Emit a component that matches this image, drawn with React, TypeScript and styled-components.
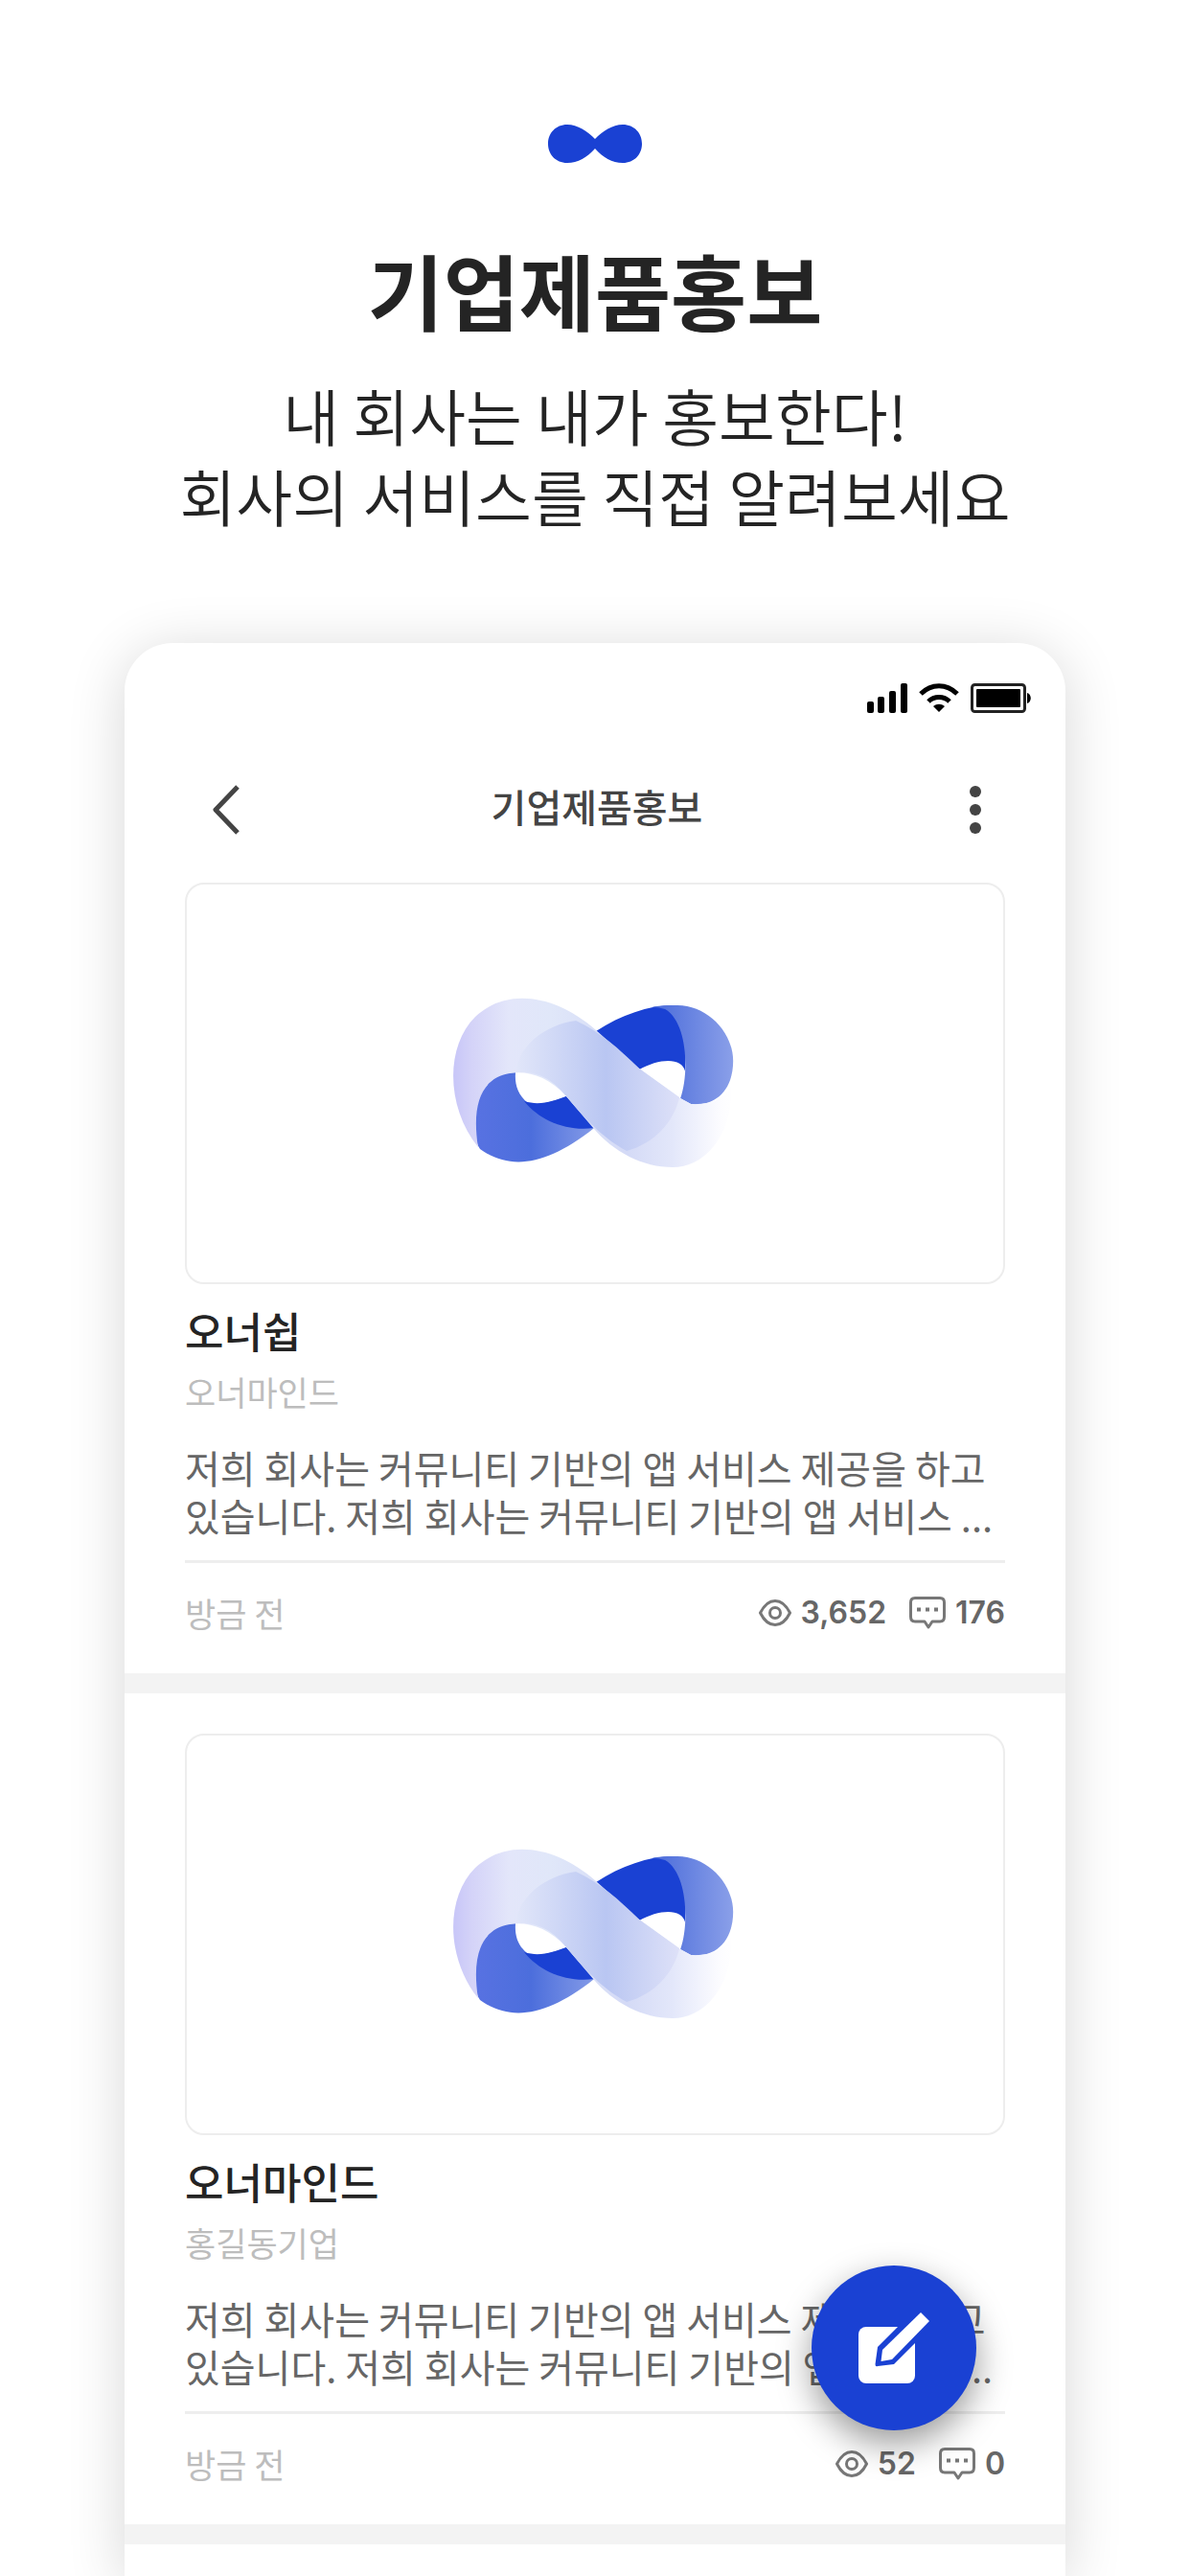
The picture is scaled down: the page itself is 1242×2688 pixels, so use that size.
import React from "react";
import styled, { createGlobalStyle } from "styled-components";

const GlobalStyle = createGlobalStyle`
  * { box-sizing: border-box; }
  body { margin: 0; background: #fff; }
  body, button { font-family: "Noto Sans CJK KR", "Noto Sans", sans-serif; }
  h1, h2, h3, p { margin: 0; }
  svg { display: block; }
`;

const Page = styled.div`
  min-height: 100vh;
  display: flex;
  flex-direction: column;
  overflow: hidden;
  color: #242424;
`;

const Hero = styled.header`
  display: flex;
  flex-direction: column;
  align-items: center;
  padding: 130px 24px 113px;
  text-align: center;
`;

const HeroTitle = styled.h1`
  margin-top: 76px;
  font-size: 86px;
  line-height: 112px;
  font-weight: 700;
`;

const HeroText = styled.p`
  margin-top: 32px;
  font-size: 64px;
  line-height: 84px;
  font-weight: 350;
`;

const Phone = styled.main`
  position: relative;
  flex: 1;
  display: flex;
  flex-direction: column;
  margin: 0 130px;
  border-radius: 50px 50px 0 0;
  background: #fff;
  box-shadow: 0 8px 60px rgba(0, 0, 0, 0.16);
`;

const StatusBar = styled.div`
  display: flex;
  justify-content: flex-end;
  align-items: center;
  gap: 12px;
  padding: 40px 36px 0 0;
  height: 74px;
`;

const NavBar = styled.nav`
  display: grid;
  grid-template-columns: 56px 1fr 56px;
  align-items: center;
  padding: 62px 88px 38px 92px;
`;

const IconButton = styled.button<{ $align: "flex-start" | "flex-end" }>`
  display: flex;
  align-items: center;
  justify-content: ${({ $align }) => $align};
  height: 76px;
  padding: 0;
  border: 0;
  background: none;
`;

const NavTitle = styled.h2`
  padding-bottom: 8px;
  text-align: center;
  font-size: 40px;
  line-height: 56px;
  font-weight: 500;
  color: #444;
`;

const Card = styled.article`
  padding: 42px 63px 39px;
  border-bottom: 21px solid #f3f3f3;

  &:first-of-type { padding-top: 0; }
`;

const Thumb = styled.div`
  display: flex;
  align-items: center;
  justify-content: center;
  aspect-ratio: 856 / 419;
  border: 2px solid #ededed;
  border-radius: 20px;

  svg { width: 35%; }
`;

const Name = styled.h3`
  margin-top: 18px;
  font-size: 44px;
  line-height: 60px;
  font-weight: 500;
`;

const Owner = styled.p`
  margin-top: 10px;
  font-size: 35px;
  line-height: 48px;
  color: #bdbdbd;
`;

const Body = styled.p`
  margin-top: 30px;
  padding-bottom: 22px;
  border-bottom: 3px solid #eee;
  font-size: 40px;
  line-height: 50px;
  color: #666;
  word-break: keep-all;
`;

const Meta = styled.footer`
  display: flex;
  align-items: center;
  justify-content: space-between;
  margin-top: 28px;
  color: #bdbdbd;
  font-size: 35px;
  line-height: 48px;
`;

const Stats = styled.div`
  display: flex;
  align-items: center;
  gap: 24px;
`;

const Stat = styled.span`
  display: flex;
  align-items: center;
  gap: 10px;
  font-family: Inter, "Noto Sans CJK KR", sans-serif;
  font-size: 32px;
  font-weight: 600;
  color: #666;
`;

const Fab = styled.button`
  position: absolute;
  right: 93px;
  bottom: 152px;
  display: flex;
  align-items: center;
  justify-content: center;
  width: 172px;
  height: 172px;
  padding: 0;
  border: 0;
  border-radius: 50%;
  background: #1a41d3;
  box-shadow: 0 14px 36px rgba(0, 0, 0, 0.4);
`;

const BrandMark = () => (
  <svg width="98" height="40" viewBox="0 0 98 40" fill="#1a41d3" aria-hidden="true">
    <path d="M20 0C31 0 41 7 49 15C57 7 67 0 78 0C90 0 98 9 98 20C98 31 90 40 78 40C67 40 57 34 49 25C41 34 31 40 20 40C8 40 0 31 0 20C0 9 8 0 20 0Z" />
  </svg>
);

const StatusIcons = () => (
  <>
    <svg width="42" height="31" viewBox="0 0 42 31" aria-hidden="true">
      <rect x="0" y="19" width="7" height="12" rx="2" />
      <rect x="11" y="14" width="7" height="17" rx="2" />
      <rect x="23" y="8" width="7" height="23" rx="2" />
      <rect x="35" y="0" width="7" height="31" rx="2" />
    </svg>
    <svg width="42" height="31" viewBox="0 0 42 31" fill="none" stroke="#000" strokeWidth="5" aria-hidden="true">
      <path d="M2 11C13 0 29 0 40 11" />
      <path d="M10 19C16 13 26 13 32 19" />
      <path d="M21 30L15 24C19 21 23 21 27 24Z" fill="#000" stroke="none" />
    </svg>
    <svg width="63" height="31" viewBox="0 0 63 31" aria-hidden="true">
      <rect x="1.500" y="1.500" width="55" height="28" rx="3" fill="none" stroke="#222" strokeWidth="3" />
      <rect x="6" y="6" width="46" height="19" rx="1" />
      <path d="M59 10C64 11 64 20 59 21Z" />
    </svg>
  </>
);

const BackIcon = () => (
  <svg width="28" height="52" viewBox="0 0 28 52" fill="none" stroke="#444" strokeWidth="5" strokeLinejoin="round" aria-hidden="true">
    <path d="M26 2L3 26L26 50" />
  </svg>
);

const MoreIcon = () => (
  <svg width="12" height="50" viewBox="0 0 12 50" fill="#444" aria-hidden="true">
    <circle cx="6" cy="6" r="6" />
    <circle cx="6" cy="25" r="6" />
    <circle cx="6" cy="44" r="6" />
  </svg>
);

const EyeIcon = () => (
  <svg width="34" height="28" viewBox="0 0 34 28" fill="none" stroke="#777" strokeWidth="3" aria-hidden="true">
    <path d="M1.500 14C6 5 11 1.500 17 1.500S28 5 32.500 14C28 23 23 26.500 17 26.500S6 23 1.500 14Z" />
    <circle cx="17" cy="14" r="5.500" />
  </svg>
);

const CommentIcon = () => (
  <svg width="38" height="34" viewBox="0 0 38 34" fill="none" stroke="#777" strokeWidth="3" strokeLinejoin="round" aria-hidden="true">
    <path d="M6 1.500H32Q36.500 1.500 36.500 6V21Q36.500 26 32 26H24L20 32L16 26H6Q1.500 26 1.500 21V6Q1.500 1.500 6 1.500Z" />
    <path d="M8 13.500H12M17 13.500H21M26 13.500H30" strokeWidth="4" />
  </svg>
);

const PencilIcon = () => (
  <svg width="74" height="74" viewBox="0 0 74 74" aria-hidden="true">
    <rect x="0" y="15" width="59" height="59" rx="8" fill="#fff" />
    <path d="M41 15L20 36L17.500 54Q17.500 57 20 56L37 54L59 32V9H47Z" fill="#1a41d3" />
    <path d="M65 0L74 9L35 49L23.500 51L25 39Z" fill="#fff" />
  </svg>
);

const RibbonLogo = ({ id }: { id: string }) => (
  <svg viewBox="0 -1 298 180" aria-hidden="true">
    <defs>
      <linearGradient id={`${id}-pale`} gradientUnits="userSpaceOnUse" x1="0" y1="0" x2="294" y2="0">
        <stop offset="0" stopColor="#c7c5f8" />
        <stop offset="0.070" stopColor="#d4d3f8" />
        <stop offset="0.200" stopColor="#e3e6fa" />
        <stop offset="0.350" stopColor="#e0e7f9" />
        <stop offset="0.620" stopColor="#d4daf6" />
        <stop offset="0.780" stopColor="#e3e7fa" />
        <stop offset="0.950" stopColor="#fcfcff" />
        <stop offset="1" stopColor="#fff" />
      </linearGradient>
      <linearGradient id={`${id}-mid`} gradientUnits="userSpaceOnUse" x1="67" y1="0" x2="237" y2="0">
        <stop offset="0" stopColor="#e1e6f9" />
        <stop offset="0.550" stopColor="#b9c6f2" />
        <stop offset="1" stopColor="#dee1f8" />
      </linearGradient>
      <linearGradient id={`${id}-left`} gradientUnits="userSpaceOnUse" x1="22" y1="0" x2="147" y2="0">
        <stop offset="0" stopColor="#5872e2" />
        <stop offset="0.480" stopColor="#4c6edc" />
        <stop offset="1" stopColor="#839ae7" />
      </linearGradient>
      <linearGradient id={`${id}-right`} gradientUnits="userSpaceOnUse" x1="210" y1="0" x2="294" y2="0">
        <stop offset="0" stopColor="#4b6cda" />
        <stop offset="1" stopColor="#8ba0e9" />
      </linearGradient>
    </defs>
    <path d="M150 35C176 18 205 8 230 8C252 9 244 40 243 77C240 62 216 63 195 75Z" fill="#1a41d3" />
    <path d="M208 10C218 8 229 8 235 8C266 8 293 36 293 66C293 97 274 114 249 111L238 105C247 80 246 26 222 12Q216 10 208 10Z" fill={`url(#${id}-right)`} />
    <path d="M66 78C36 79 22 101 22 123C22 140 24 150 29 158C60 180 98 176 148 136L119 103C106 108 91 113 79 110C68 101 65 90 66 78Z" fill={`url(#${id}-left)`} />
    <path d="M75 108C91 113 106 108 119 103L148 136C119 140 91 128 75 108Z" fill="#1a41d3" />
    <path d="M27 156C-6 115 -8 52 24 20C57 -11 108 -3 150 34L195 74L236 104L249 111C272 112 285 104 291 92C293 145 262 177 230 177C199 177 168 161 147 136L119 103C100 82 79 76 60 79C30 84 20 112 27 156Z" fill={`url(#${id}-pale)`} />
    <path d="M129 24C98 28 68 50 67 78C90 76 106 87 119 103C143 132 160 148 182 160C211 152 231 130 237 104L195 74C174 53 153 35 129 24Z" fill={`url(#${id}-mid)`} />
  </svg>
);

type Post = { id: string; name: string; owner: string; views: string; comments: string };

const posts: Post[] = [
  { id: "ownership", name: "오너쉽", owner: "오너마인드", views: "3,652", comments: "176" },
  { id: "ownermind", name: "오너마인드", owner: "홍길동기업", views: "52", comments: "0" },
];

const PostCard = ({ post }: { post: Post }) => (
  <Card>
    <Thumb><RibbonLogo id={post.id} /></Thumb>
    <Name>{post.name}</Name>
    <Owner>{post.owner}</Owner>
    <Body>
      저희 회사는 커뮤니티 기반의 앱 서비스 제공을 하고 있습니다. 저희 회사는 커뮤니티 기반의 앱 서비스 ...
    </Body>
    <Meta>
      <span>방금 전</span>
      <Stats>
        <Stat><EyeIcon />{post.views}</Stat>
        <Stat><CommentIcon />{post.comments}</Stat>
      </Stats>
    </Meta>
  </Card>
);

export default function App() {
  return (
    <Page>
      <GlobalStyle />
      <Hero>
        <BrandMark />
        <HeroTitle>기업제품홍보</HeroTitle>
        <HeroText>내 회사는 내가 홍보한다!<br />회사의 서비스를 직접 알려보세요</HeroText>
      </Hero>
      <Phone>
        <StatusBar><StatusIcons /></StatusBar>
        <NavBar>
          <IconButton type="button" aria-label="뒤로" $align="flex-start"><BackIcon /></IconButton>
          <NavTitle>기업제품홍보</NavTitle>
          <IconButton type="button" aria-label="더보기" $align="flex-end"><MoreIcon /></IconButton>
        </NavBar>
        {posts.map((post) => <PostCard key={post.id} post={post} />)}
        <Fab type="button" aria-label="글쓰기"><PencilIcon /></Fab>
      </Phone>
    </Page>
  );
}
